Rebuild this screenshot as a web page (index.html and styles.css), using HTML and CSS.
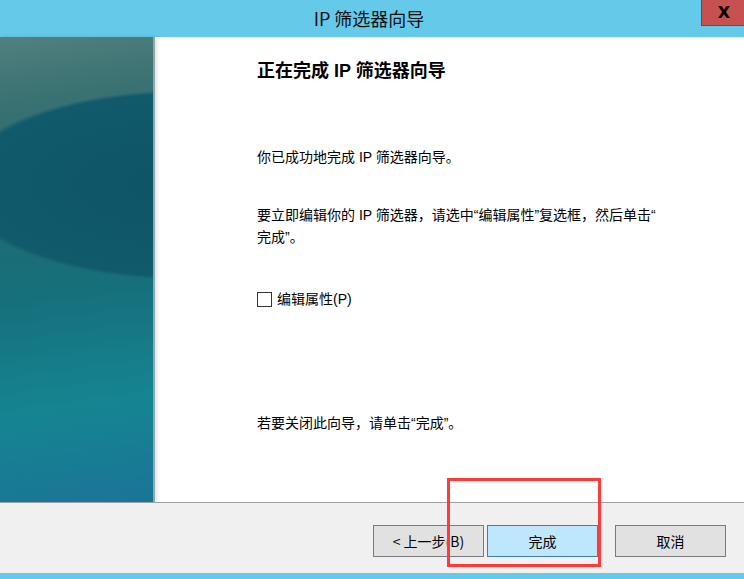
FILE: index.html
```html
<!DOCTYPE html>
<html lang="zh-CN">
<head>
<meta charset="UTF-8">
<meta name="viewport" content="width=device-width, initial-scale=1.0">
<title>IP 筛选器向导</title>
<link rel="stylesheet" href="styles.css">
</head>
<body>

<div class="window">
    <div class="titlebar">
        <div></div>
        <div class="title">IP 筛选器向导</div>
        <div class="close-btn">X</div>
    </div>

    <div class="main">
        <div class="side"></div>
        <div class="content">
            <h1>正在完成 IP 筛选器向导</h1>
            <p class="done-msg">你已成功地完成 IP 筛选器向导。</p>
            <p class="edit-msg">要立即编辑你的 IP 筛选器，请选中“编辑属性”复选框，然后单击“<br>完成”。</p>
            <label class="check">
                <span class="box"></span>
                编辑属性(P)
            </label>
            <p class="close-msg">若要关闭此向导，请单击“完成”。</p>
        </div>
    </div>

    <div class="footer">
        <button class="button">&lt; 上一步(B)</button>
        <button class="button primary">完成</button>
        <button class="button cancel">取消</button>
    </div>

    <div class="bottom-bar"></div>

    <!-- annotation box around the finish button -->
    <div class="highlight"></div>
</div>

</body>
</html>
```

FILE: styles.css
```css
body {
    margin: 0;
    padding: 0;
    font-family: "Liberation Sans", "Noto Sans CJK SC", sans-serif;
    color: #000;
}
.window {
    position: relative;
    width: 744px;
    height: 579px;
    display: flex;
    flex-direction: column;
    overflow: hidden;
}
.titlebar {
    height: 37px;
    background-color: #65c9e9;
    display: grid;
    grid-template-columns: 1fr auto 1fr;
}
.title {
    font-family: "Noto Sans CJK SC", sans-serif;
    font-size: 18px;
    line-height: 36px;
    color: #111;
    padding-right: 6px;
}
.close-btn {
    justify-self: end;
    width: 42px;
    height: 25px;
    background-color: #c75050;
    border-left: 1px solid #8e3b3b;
    border-bottom: 1px solid #8e3b3b;
    color: #000;
    font-family: "DejaVu Sans", sans-serif;
    font-weight: bold;
    font-size: 16px;
    line-height: 25px;
    text-align: center;
    text-indent: 2px;
}
.main {
    height: 465px;
    display: flex;
    background-color: #fff;
}
.side {
    width: 153px;
    border-right: 2px solid #8fa9aa;
    box-shadow: 2px 0 4px rgba(0, 0, 0, 0.12);
    background:
        radial-gradient(ellipse 230px 95px at 185px 148px, #0e5566 0, #105a6b 96%, rgba(16, 90, 107, 0) 100%),
        linear-gradient(172deg, #52807f 0, #3c7373 12%, #24686f 30%, #15707c 55%, #158591 78%, #1b7498 100%);
}
.content {
    flex: 1;
    padding: 21px 30px 0 102px;
    font-family: "Liberation Sans", "Noto Sans CJK SC", sans-serif;
    font-size: 14px;
}
.content h1 {
    margin: 0;
    font-size: 18px;
    line-height: 26px;
    font-weight: bold;
}
.content p {
    margin: 0;
    line-height: 22px;
}
.done-msg {
    padding-top: 62px;
}
.edit-msg {
    padding-top: 36px;
}
.check {
    display: flex;
    align-items: center;
    gap: 5px;
    margin-top: 40px;
    line-height: 22px;
}
.box {
    width: 13px;
    height: 13px;
    border: 1px solid #333;
    background-color: #fff;
}
.close-msg {
    padding-top: 102px;
}
.footer {
    height: 71px;
    border-top: 1px solid #a0a0a0;
    background-color: #f0f0f0;
    display: flex;
    align-items: flex-start;
    justify-content: flex-end;
    padding: 22px 18px 0 0;
    box-sizing: border-box;
}
.button {
    width: 111px;
    height: 32px;
    background-color: #e1e1e1;
    border: 1px solid #7a7a7a;
    font-family: "Noto Sans CJK SC", sans-serif;
    font-size: 14px;
    color: #000;
    padding: 0;
    margin-left: 3px;
}
.button.primary {
    background-color: #bee6fd;
    border-color: #3c7fb1;
}
.button.cancel {
    margin-left: 17px;
}
.bottom-bar {
    height: 6px;
    background-color: #65c9e9;
}
.highlight {
    position: absolute;
    left: 447px;
    top: 478px;
    width: 148px;
    height: 83px;
    border: 3px solid #ff3b3b;
}
```
